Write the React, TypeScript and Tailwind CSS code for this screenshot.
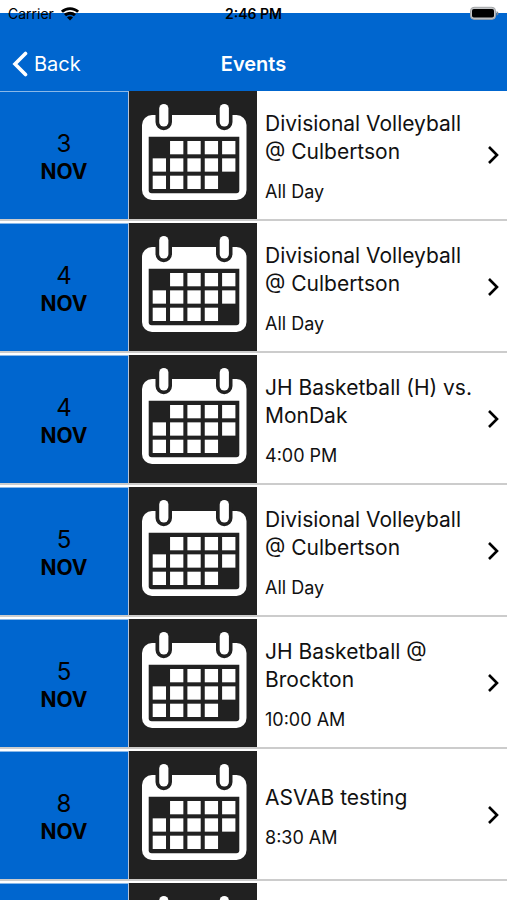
type EventItem = {
  id: number;
  day?: string;
  month?: string;
  title?: string;
  time?: string;
};

const events: EventItem[] = [
  { id: 1, day: '3', month: 'NOV', title: 'Divisional Volleyball @ Culbertson', time: 'All Day' },
  { id: 2, day: '4', month: 'NOV', title: 'Divisional Volleyball @ Culbertson', time: 'All Day' },
  { id: 3, day: '4', month: 'NOV', title: 'JH Basketball (H) vs. MonDak', time: '4:00 PM' },
  { id: 4, day: '5', month: 'NOV', title: 'Divisional Volleyball @ Culbertson', time: 'All Day' },
  { id: 5, day: '5', month: 'NOV', title: 'JH Basketball @ Brockton', time: '10:00 AM' },
  { id: 6, day: '8', month: 'NOV', title: 'ASVAB testing', time: '8:30 AM' },
  { id: 7 },
];

// columns that hold a day, one list per week
const weeks = [
  [1, 2, 3, 4],
  [0, 1, 2, 3, 4],
  [0, 1, 2, 3],
];

function CalendarIcon() {
  return (
    <svg viewBox="-1 0 128 128" className="w-32 h-32" fill="white" aria-hidden="true">
      <rect x="12" y="24" width="104.5" height="85" rx="10" />
      <path d="M25.5 20h16.5v11a8.25 8.25 0 0 1-16.5 0zM86 20h16.5v11a8.25 8.25 0 0 1-16.5 0z" fill="#212121" />
      <rect x="29.2" y="13" width="9.2" height="22.5" rx="4.6" />
      <rect x="89.7" y="13" width="9.2" height="22.5" rx="4.6" />
      <path d="M18.7 45.7h90.6v53.6a3 3 0 0 1-3 3H21.7a3 3 0 0 1-3-3z" fill="#212121" />
      {weeks.map((week, row) =>
        week.map((col) => (
          <rect key={`${row}-${col}`} x={22.7 + col * 17.35} y={50 + row * 17.35} width="13.3" height="13.3" />
        ))
      )}
    </svg>
  );
}

function StatusBar() {
  return (
    <div className="absolute inset-x-0 top-0 grid grid-cols-3 items-center h-7 px-2 text-sm text-black">
      <div className="flex items-center gap-1.5">
        <span>Carrier</span>
        <svg viewBox="0 0 20 15" className="w-5 h-4" fill="black" aria-hidden="true">
          <path d="M10 .7C6.5.7 3.3 2 .9 4.2l2 2.1A10.4 10.4 0 0 1 10 3.5c2.7 0 5.2 1 7.1 2.8l2-2.1A13.3 13.3 0 0 0 10 .7z" />
          <path d="M10 5.3c-2.3 0-4.4.9-6 2.3l2 2.1a5.9 5.9 0 0 1 8 0l2-2.1a8.8 8.8 0 0 0-6-2.3z" />
          <path d="M10 9.8c-1.2 0-2.2.4-3 1.1l3 3.2 3-3.2c-.8-.7-1.8-1.1-3-1.1z" />
        </svg>
      </div>
      <span className="text-center font-semibold">2:46 PM</span>
      <svg viewBox="0 0 32 14" className="w-8 h-4 justify-self-end" aria-label="Battery full" role="img">
        <rect x="3.5" y="0.3" width="25" height="12" rx="3.5" fill="#c4c6c8" stroke="#a3a5a8" />
        <rect x="5" y="2" width="22" height="8.6" rx="1.8" fill="black" />
        <path d="M29.5 4.3c1.3.4 2 1.2 2 2.2s-.7 1.8-2 2.2z" fill="#7d8794" />
      </svg>
    </div>
  );
}

function EventRow({ event }: { event: EventItem }) {
  return (
    <li className="border-b-2 border-[#cccccc] mb-0.5">
      <a href="#event" aria-label={event.title ?? 'Event'} className="flex h-32 bg-white">
        <div className="w-[129px] shrink-0 flex flex-col items-center justify-center pt-1 bg-[#0066cf] border-t border-r border-t-[#8ab8e8] border-r-[#b9c3d6] text-black">
          <span className="text-2xl leading-7">{event.day}</span>
          <span className="text-[21px] leading-7 font-bold">{event.month}</span>
        </div>
        <div className="w-32 shrink-0 bg-[#212121]">
          <CalendarIcon />
        </div>
        <div className="flex-1 min-w-0 flex flex-col justify-center gap-3.5 pt-1 pl-2 text-[#111111]">
          <h2 className="text-[21px] leading-7">{event.title}</h2>
          <p className="text-lg leading-6">{event.time}</p>
        </div>
        <div className="shrink-0 flex items-center pl-1 pr-2">
          {event.title && (
            <svg viewBox="0 0 12 20" className="w-3 h-5" fill="none" stroke="black" strokeWidth="2.6" aria-hidden="true">
              <path d="M2 2l8 8-8 8" />
            </svg>
          )}
        </div>
      </a>
    </li>
  );
}

export default function App() {
  return (
    <div className="h-screen overflow-hidden bg-white font-['Inter','Liberation_Sans',sans-serif]">
      <header className="relative pt-[13px]">
        <div className="grid grid-cols-3 items-center bg-[#0066cf] pt-6 px-3 text-white text-xl">
          <button type="button" className="flex items-center gap-1.5 h-[54px]">
            <svg viewBox="0 0 16 26" className="w-4 h-7" fill="none" stroke="white" strokeWidth="3.6" strokeLinecap="round" aria-hidden="true">
              <path d="M13.5 2.5L3 13l10.5 10.5" />
            </svg>
            Back
          </button>
          <h1 className="text-center font-semibold">Events</h1>
        </div>
        <StatusBar />
      </header>

      <ul>
        {events.map((event) => (
          <EventRow key={event.id} event={event} />
        ))}
      </ul>
    </div>
  );
}
